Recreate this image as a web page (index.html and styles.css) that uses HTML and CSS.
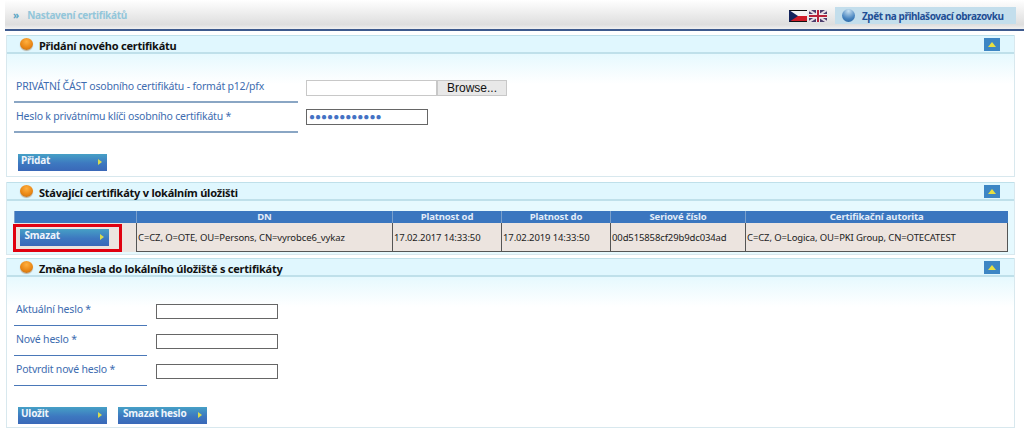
FILE: index.html
```html
<!DOCTYPE html>
<html>
<head>
    <title>Nastavení certifikátů</title>
    <link rel="stylesheet" href="styles.css">
</head>
<body>
    <!-- Top bar -->
    <header class="topbar">
        <div class="crumb"><span class="crumb-arrows">»</span> Nastavení certifikátů</div>
        <div class="flags">
            <svg class="flag" width="18" height="12" viewBox="0 0 18 12">
                <rect width="18" height="12" fill="#111"/>
                <rect y="1" width="18" height="5" fill="#f4f4f4"/>
                <rect y="6" width="18" height="5" fill="#d01c28"/>
                <polygon points="0,0 9,6 0,12" fill="#14245c"/>
            </svg>
            <svg class="flag" width="18" height="12" viewBox="0 0 18 12">
                <rect width="18" height="12" fill="#4a3c6c"/>
                <path d="M0 0L18 12M18 0L0 12" stroke="#e4dde4" stroke-width="2.2"/>
                <path d="M9 0V12M0 6H18" stroke="#eee" stroke-width="4"/>
                <path d="M9 0V12M0 6H18" stroke="#b8243c" stroke-width="2"/>
            </svg>
        </div>
        <a class="back-link">
            <span class="ball ball-blue"></span>
            Zpět na přihlašovací obrazovku
        </a>
    </header>

    <main class="content">
        <!-- Add certificate -->
        <section class="panel panel-add">
            <div class="panel-head">
                <span class="ball"></span>
                <h2>Přidání nového certifikátu</h2>
                <span class="collapse"></span>
            </div>
            <div class="panel-body">
                <div class="form-row wide">
                    <label>PRIVÁTNÍ ČÁST osobního certifikátu - formát p12/pfx</label>
                    <div class="file-input">
                        <span class="file-name"></span>
                        <span class="file-btn">Browse...</span>
                    </div>
                </div>
                <div class="form-row wide">
                    <label>Heslo k privátnímu klíči osobního certifikátu *</label>
                    <div class="text-input dots">●●●●●●●●●●●●</div>
                </div>
                <div class="buttons">
                    <a class="btn">Přidat</a>
                </div>
            </div>
        </section>

        <!-- Existing certificates -->
        <section class="panel panel-list">
            <div class="panel-head">
                <span class="ball"></span>
                <h2>Stávající certifikáty v lokálním úložišti</h2>
                <span class="collapse"></span>
            </div>
            <div class="table-wrap">
                <table class="cert-table">
                    <thead>
                        <tr>
                            <th class="col-action"></th>
                            <th class="col-dn">DN</th>
                            <th class="col-date">Platnost od</th>
                            <th class="col-date">Platnost do</th>
                            <th class="col-serial">Seriové číslo</th>
                            <th>Certifikační autorita</th>
                        </tr>
                    </thead>
                    <tbody>
                        <tr>
                            <td class="action-cell">
                                <a class="btn btn-indent">Smazat</a>
                            </td>
                            <td>C=CZ, O=OTE, OU=Persons, CN=vyrobce6_vykaz</td>
                            <td>17.02.2017 14:33:50</td>
                            <td>17.02.2019 14:33:50</td>
                            <td>00d515858cf29b9dc034ad</td>
                            <td>C=CZ, O=Logica, OU=PKI Group, CN=OTECATEST</td>
                        </tr>
                    </tbody>
                </table>
            </div>
        </section>

        <!-- Change password -->
        <section class="panel panel-pass">
            <div class="panel-head">
                <span class="ball"></span>
                <h2>Změna hesla do lokálního úložiště s certifikáty</h2>
                <span class="collapse"></span>
            </div>
            <div class="panel-body">
                <div class="form-row narrow">
                    <label>Aktuální heslo *</label>
                    <div class="text-input short"></div>
                </div>
                <div class="form-row narrow">
                    <label>Nové heslo *</label>
                    <div class="text-input short"></div>
                </div>
                <div class="form-row narrow">
                    <label>Potvrdit nové heslo *</label>
                    <div class="text-input short"></div>
                </div>
                <div class="buttons">
                    <a class="btn">Uložit</a>
                    <a class="btn btn-indent">Smazat heslo</a>
                </div>
            </div>
        </section>
    </main>
</body>
</html>
```

FILE: styles.css
```css
body {
    margin: 0;
    font-family: Tahoma, "Noto Sans", sans-serif;
    font-size: 11px;
    background-color: #fff;
    overflow: hidden;
}

/* top bar */
.topbar {
    display: flex;
    align-items: flex-start;
    box-sizing: border-box;
    height: 31px;
    margin-left: 5px;
    padding: 7px 8px 0 8px;
    border-bottom: 2px solid #3d5a8e;
    background: linear-gradient(#ffffff, #dedede 85%, #f0f0f0);
}
.crumb {
    flex: 1;
    font-size: 10px;
    font-weight: bold;
    letter-spacing: -0.3px;
    line-height: 17px;
    color: #93c6da;
}
.crumb-arrows {
    margin-right: 6px;
    color: #5aa5c5;
}
.flags {
    display: flex;
    gap: 2px;
    margin: 3px 8px 0 0;
}
.flag {
    display: block;
}
.back-link {
    display: flex;
    align-items: center;
    gap: 7px;
    box-sizing: border-box;
    width: 181px;
    height: 17px;
    padding-left: 7px;
    background-color: #c3deec;
    color: #1f4f95;
    font-size: 10px;
    font-weight: bold;
    letter-spacing: -0.45px;
    white-space: nowrap;
}

/* little balls in headers */
.ball {
    width: 13px;
    height: 12px;
    flex: none;
    border-radius: 50%;
    background: radial-gradient(circle at 50% 30%, #ffb040, #e88412 60%, #a06a30);
    box-shadow: 0 1px 1px #b8b0a0;
}
.ball-blue {
    height: 13px;
    background: radial-gradient(circle at 50% 15%, #c9e2f2, #4a86c0 60%, #1f5c9c);
    box-shadow: none;
}

/* panels */
.content {
    padding: 4px 9px 0 6px;
}
.panel {
    border: 1px solid #d8e8ee;
    border-top: 0;
    margin-bottom: 5px;
}
.panel-list {
    margin-bottom: 3px;
}
.panel-head {
    display: flex;
    align-items: center;
    box-sizing: border-box;
    height: 19px;
    padding: 0 14px 0 13px;
    background-color: #e0f7fe;
    border-top: 1px solid #bfe0ea;
    border-bottom: 2px solid #bfe0ea;
}
.panel-head h2 {
    flex: 1;
    margin: 0 0 0 6px;
    padding-top: 2px;
    font-size: 11px;
    letter-spacing: -0.23px;
    color: #111;
}
.collapse {
    position: relative;
    width: 16px;
    height: 13px;
    background-color: #3d86c4;
}
.collapse::after {
    content: "";
    position: absolute;
    left: 4px;
    top: 4px;
    border-left: 4px solid transparent;
    border-right: 4px solid transparent;
    border-bottom: 5px solid #e8e040;
}
.panel-body {
    padding: 19px 7px 0 7px;
    background: linear-gradient(#e6f9fe, #ffffff 30px);
}
.panel-add .panel-body {
    height: 103px;
}
.panel-pass .panel-body {
    height: 131px;
}

/* form rows */
.form-row {
    display: flex;
    align-items: flex-start;
}
.form-row label {
    flex: none;
    box-sizing: border-box;
    height: 30px;
    padding: 6px 0 0 2px;
    border-bottom: 1px solid #4a78b8;
    color: #3d6cb0;
    font-size: 10.5px;
    letter-spacing: -0.2px;
}
.form-row.wide label {
    width: 284px;
    margin-right: 8px;
    border-bottom: 2px solid #8aa6c4;
}
.form-row.narrow label {
    width: 133px;
    margin-right: 9px;
}
.file-input {
    display: flex;
    height: 16px;
    margin-top: 7px;
}
.file-name {
    width: 129px;
    border: 1px solid #c8c8c8;
    background-color: #fff;
}
.file-btn {
    width: 70px;
    box-sizing: border-box;
    border: 1px solid #c8c8c8;
    background-color: #e8e8e8;
    font-family: "Liberation Sans", sans-serif;
    font-size: 12px;
    line-height: 14px;
    text-align: center;
    color: #111;
}
.text-input {
    width: 122px;
    height: 16px;
    margin-top: 6px;
    box-sizing: border-box;
    border: 1px solid #666;
    background-color: #fff;
}
.text-input.short {
    height: 15px;
    margin-top: 8px;
}
.dots {
    color: #4472c4;
    font-family: "Liberation Sans", sans-serif;
    font-size: 10px;
    line-height: 14px;
    padding-left: 2px;
    overflow: hidden;
    white-space: nowrap;
}
.buttons {
    display: flex;
    gap: 11px;
    margin: 21px 0 0 4px;
}

/* buttons */
.btn {
    position: relative;
    display: block;
    box-sizing: border-box;
    width: 89px;
    height: 17px;
    padding-left: 3px;
    background: linear-gradient(#46a0c6, #3d78c0 55%, #3a68b8);
    color: #eef4fb;
    font-size: 10px;
    font-weight: bold;
    letter-spacing: -0.2px;
    line-height: 13px;
}
.btn-indent {
    padding-left: 5px;
}
.btn::after {
    content: "";
    position: absolute;
    right: 5px;
    top: 5px;
    border-top: 3px solid transparent;
    border-bottom: 3px solid transparent;
    border-left: 4px solid #d8dc50;
}

/* table */
.table-wrap {
    padding: 10px 6px 2px 7px;
    background-color: #e6f9fe;
}
.cert-table {
    width: 100%;
    border-collapse: collapse;
    table-layout: fixed;
    font-size: 9.5px;
    letter-spacing: -0.12px;
}
.cert-table th {
    box-sizing: border-box;
    height: 12px;
    padding: 0;
    background-color: #3a76bf;
    border-left: 1px solid #7aa0cc;
    color: #e2ecf8;
    font-weight: bold;
    line-height: 12px;
}
.cert-table td {
    height: 28px;
    padding: 0 0 0 1px;
    background-color: #ece4df;
    border-left: 1px solid #444;
    border-bottom: 1px solid #555;
    border-right: 1px solid #555;
    color: #222;
    white-space: nowrap;
    overflow: hidden;
}
.col-action { width: 122px; }
.col-dn { width: 256px; }
.col-date { width: 109px; }
.col-serial { width: 135px; }

/* red highlight round the delete button */
.cert-table .action-cell {
    position: relative;
    overflow: visible;
    border-left: 0;
    border-bottom: 0;
    padding: 0;
}
.action-cell .btn {
    margin-left: 5px;
}
.action-cell::after {
    content: "";
    position: absolute;
    left: -2px;
    top: 1px;
    width: 103px;
    height: 22px;
    border: 3px solid #e0000f;
    pointer-events: none;
}
```
